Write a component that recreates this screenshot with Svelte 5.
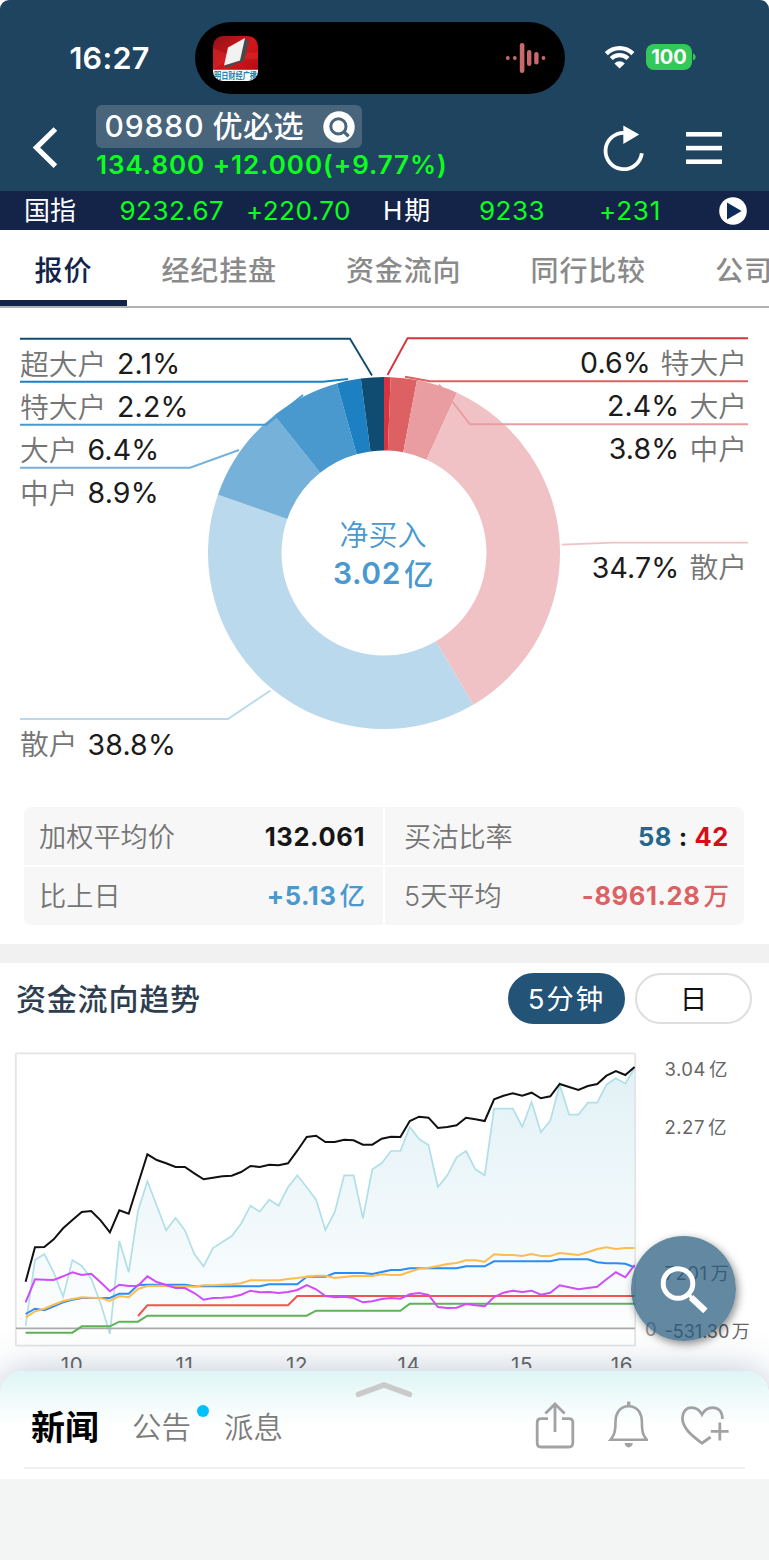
<script lang="ts">
  type Label = { name: string; pct: string; y: number; color: string; line: string };

  const tabs = ['报价', '经纪挂盘', '资金流向', '同行比较', '公司资料'];
  let activeTab = $state(0);
  let range = $state('5m');

  // ring geometry, clockwise from 12 o'clock
  const CX = 384;
  const CY = 553;
  const R_OUT = 176;
  const R_IN = 102.5;

  const slices = [
    { value: 0.6, color: '#d9333f' },
    { value: 2.4, color: '#dd6063' },
    { value: 3.8, color: '#e99da1' },
    { value: 34.7, color: '#f1c2c5' },
    { value: 38.8, color: '#bad9ed' },
    { value: 8.9, color: '#75b1d9' },
    { value: 6.4, color: '#4999cf' },
    { value: 2.2, color: '#1c80c2' },
    { value: 2.1, color: '#104c72' },
  ];

  const sellLabels: Label[] = [
    { name: '超大户', pct: '2.1%', y: 374, color: '#104c72', line: 'M20 338.7H350L372 375.5' },
    { name: '特大户', pct: '2.2%', y: 417, color: '#1c80c2', line: 'M20 381.7H323L348 379' },
    { name: '大户', pct: '6.4%', y: 460, color: '#4999cf', line: 'M20 424.7H266L303 395' },
    { name: '中户', pct: '8.9%', y: 503, color: '#75b1d9', line: 'M20 467.7H190L239 450' },
    { name: '散户', pct: '38.8%', y: 754.5, color: '#bad9ed', line: 'M20 719H228L270.5 690.5' },
  ];

  const buyLabels: Label[] = [
    { name: '特大户', pct: '0.6%', y: 373.3, color: '#d9333f', line: 'M748 338.3H407.5L387.5 375' },
    { name: '大户', pct: '2.4%', y: 416.3, color: '#dd6063', line: 'M748 381.3H430L405 376.7' },
    { name: '中户', pct: '3.8%', y: 459.3, color: '#e99da1', line: 'M748 424.3H470L439 384.5' },
    { name: '散户', pct: '34.7%', y: 577.8, color: '#f1c2c5', line: 'M748 542.6H613L562 544.6' },
  ];

  function polar(r: number, t: number) {
    const a = t * 2 * Math.PI;
    return `${(CX + r * Math.sin(a)).toFixed(2)} ${(CY - r * Math.cos(a)).toFixed(2)}`;
  }

  const total = slices.reduce((s, d) => s + d.value, 0);
  let acc = 0;
  const arcs = slices.map((d) => {
    const a = acc / total;
    acc += d.value;
    const b = acc / total;
    return {
      color: d.color,
      d: `M${polar(R_OUT, a)}A${R_OUT} ${R_OUT} 0 0 1 ${polar(R_OUT, b)}L${polar(R_IN, b)}A${R_IN} ${R_IN} 0 0 0 ${polar(R_IN, a)}Z`,
    };
  });

  // series are sampled every 5 minutes, y in thirds of a pixel below the section top
  const X0 = 25.6;
  const STEP = 9.37;
  const TOP = 1040;
  const fill = (v: number, n: number) => Array(n).fill(v);

  const price = [
    858, 660, 642, 697, 770, 660, 678, 716, 790, 882, 603, 697, 513, 424, 497, 571, 534, 571, 642, 679, 624, 606,
    588, 551, 497, 515, 479, 497, 442, 406, 442, 479, 570, 516, 406, 406, 535, 388, 370, 333, 333, 261, 297, 315,
    441, 406, 352, 333, 388, 406, 206, 206, 206, 260, 186, 277, 242, 134, 224, 224, 188, 188, 134, 115, 131, 84,
  ];
  const net = [
    725, 622, 621, 598, 565, 540, 516, 513, 541, 577, 511, 521, 432, 343, 360, 370, 381, 381, 400, 418, 413, 409,
    407, 396, 378, 381, 374, 376, 370, 332, 291, 287, 306, 306, 299, 301, 314, 314, 296, 290, 291, 243, 230, 233,
    264, 261, 256, 233, 238, 243, 178, 167, 160, 167, 158, 175, 169, 132, 141, 150, 138, 132, 107, 93, 105, 81,
  ];
  const retail = [
    787, 718, 719, 720, 709, 697, 705, 701, 727, 754, 734, 738, 737, 709, 726, 735, 744, 744, 759, 779, 774, 773,
    771, 764, 752, 757, 756, 759, 756, 750, 735, 748, 768, 772, 770, 774, 787, 784, 777, 774, 776, 763, 759, 765,
    801, 804, 803, 792, 796, 799, 771, 758, 752, 756, 752, 764, 758, 736, 742, 748, 744, 740, 718, 697, 712, 675,
  ];
  const large = [
    822, 806, 811, 799, 787, 779, 774, 774, 774, 774, 761, 761, 735, ...fill(734, 5), ...fill(739, 8),
    ...fill(733, 4), 710, 710, 710, 699, 699, 699, 699, 702, 696, 690, 690, ...fill(685, 6), 679, 679, 679,
    ...fill(664, 7), ...fill(658, 4), 667, 670, 670, 671, 682,
  ];
  const medium = [
    832, 814, 806, 794, 783, 777, 772, 773, 774, 783, 768, 772, 747, 738, 737, 738, 740, 739, 740, 736, 736, 734,
    733, 730, 721, 721, 721, 721, 717, 714, 710, 707, 707, 714, 711, 708, 708, 708, 703, 705, 705, 695, 686, 683,
    678, 672, 669, 661, 661, 665, 643, 645, 645, 648, 642, 648, 648, 639, 642, 645, 637, 627, 622, 627, 624, 624,
  ];
  const superLarge = [828, ...fill(796, 16), ...fill(768, 37)];
  const extraLarge = [
    ...fill(878, 6), ...fill(859, 4), ...fill(845, 3), ...fill(827, 18), ...fill(812, 10), ...fill(791, 25),
  ];

  function path(values: number[], start = 0) {
    return values
      .map((v, i) => `${i ? 'L' : 'M'}${(X0 + (i + start) * STEP).toFixed(1)} ${(TOP + v / 3).toFixed(1)}`)
      .join('');
  }

  const series = [
    { d: path(extraLarge), color: '#5fb355' },
    { d: path(superLarge, 12), color: '#f2554f' },
    { d: path(large), color: '#2a8cf8' },
    { d: path(medium), color: '#fdbc50' },
    { d: path(retail), color: '#cf4df8' },
    { d: path(net), color: '#111' },
  ];
  const area = path(price) + `V1328.3H${X0}Z`;

  const hours = [
    { x: 72, text: '10' },
    { x: 184.5, text: '11' },
    { x: 297, text: '12' },
    { x: 409, text: '14' },
    { x: 522, text: '15' },
    { x: 622, text: '16' },
  ];
</script>

<div class="app">
  <header class="header">
    <div class="status">
      <div class="time">16:27</div>
      <div class="island">
        <svg width="45" height="45" viewBox="0 0 45 45">
          <defs>
            <linearGradient id="red" x1="0" y1="0" x2="1" y2="1">
              <stop offset="0" stop-color="#8f1216" />
              <stop offset=".5" stop-color="#d3161b" />
              <stop offset="1" stop-color="#a30d11" />
            </linearGradient>
            <clipPath id="round"><rect width="45" height="45" rx="10" /></clipPath>
          </defs>
          <g clip-path="url(#round)">
            <rect width="45" height="45" fill="url(#red)" />
            <path d="M0 12L14 18L45 16V23L14 24L0 34Z" fill="#e02a2c" opacity=".5" />
            <path d="M32 2L36 5L31 25L14 31.6L11 29.4L26 25Z" fill="#4a4a4a" />
            <path d="M15 11.6L32 2L27 24.6L11 29.4Z" fill="#f2f2f2" />
            <rect y="33.8" width="45" height="11.2" fill="#fff" />
            <text x="1" y="42.8" textLength="43" lengthAdjust="spacingAndGlyphs" class="logo-text">明日财经广播</text>
          </g>
        </svg>
        <svg width="42" height="34" viewBox="505 41 42 34" fill="#c9696c">
          <circle cx="507.8" cy="58" r="1.9" />
          <circle cx="514.8" cy="58" r="1.9" />
          <rect x="519.8" y="43" width="4.6" height="30" rx="2.3" />
          <rect x="527" y="50" width="4.4" height="16" rx="2.2" />
          <rect x="534.2" y="52" width="4.4" height="12.4" rx="2.2" />
          <circle cx="543.5" cy="58" r="1.9" />
        </svg>
      </div>
      <div class="signals">
        <svg width="32" height="26" viewBox="604 44 32 26" fill="none" stroke="#fff">
          <path d="M606.3 53.6A18.8 18.8 0 0 1 632.9 53.6" stroke-width="4.4" />
          <path d="M611.2 58.5A12 12 0 0 1 628 58.5" stroke-width="4.2" />
          <path d="M619.6 68.6L614.4 63.4A7.4 7.4 0 0 1 624.8 63.4Z" fill="#fff" stroke="none" />
        </svg>
        <div class="battery">100</div>
        <svg class="cap" width="4" height="8" viewBox="0 0 4 8"><path d="M0 0.5C3.6 1.5 3.6 6.5 0 7.5Z" fill="#34c759" /></svg>
      </div>
    </div>

    <div class="title-row">
      <svg class="back" width="28" height="44" viewBox="31 126 28 44" fill="none" stroke="#fff" stroke-width="5.2">
        <path d="M55.4 129L36.4 147.6L55.4 166.2" />
      </svg>
      <div class="stock">
        <div class="pill">
          <span class="code">09880</span><span class="name">优必选</span>
          <svg width="32" height="32" viewBox="0 0 32 32">
            <circle cx="16" cy="16" r="15.7" fill="#fff" />
            <circle cx="15.4" cy="15.4" r="7.6" fill="none" stroke="#48657c" stroke-width="3" />
            <path d="M20.6 20.4L25.6 25.4" stroke="#48657c" stroke-width="3.4" />
          </svg>
        </div>
        <div class="quote">134.800 +12.000(+9.77%)</div>
      </div>
      <svg width="42" height="50" viewBox="603 123 42 50">
        <path d="M624.5 132.8A18.2 18.2 0 1 0 641.8 153.2" fill="none" stroke="#fff" stroke-width="3.8" />
        <path d="M623.3 125.4L639.2 134.6L623.3 144Z" fill="#fff" />
      </svg>
      <svg class="menu" width="36" height="32" viewBox="0 0 36 32" fill="#fff">
        <rect width="36" height="4.6" />
        <rect y="13.8" width="36" height="4.6" />
        <rect y="27.4" width="36" height="4.6" />
      </svg>
    </div>
  </header>

  <div class="ticker">
    <span class="t1">国指</span>
    <span class="t2 up">9232.67</span>
    <span class="t3 up">+220.70</span>
    <span class="t4">H期</span>
    <span class="t5 up">9233</span>
    <span class="t6 up">+231</span>
    <svg width="28" height="28" viewBox="0 0 28 28">
      <circle cx="14" cy="14" r="13.8" fill="#fff" />
      <path d="M8 5.6L22.6 14L8 22.6Z" fill="#0b2b5c" />
    </svg>
  </div>

  <nav class="tabs">
    {#each tabs as tab, i}
      <button class="tab" class:active={activeTab === i} onclick={() => (activeTab = i)}>{tab}</button>
    {/each}
  </nav>

  <section class="donut">
    <svg width="769" height="499" viewBox="0 308 769 499">
      {#each arcs as arc}
        <path d={arc.d} fill={arc.color} />
      {/each}
      {#each [...sellLabels, ...buyLabels] as l}
        <path d={l.line} fill="none" stroke={l.color} stroke-width="1.9" />
      {/each}
      {#each sellLabels as l}
        <text x="20" y={l.y + 0.5} class="who">{l.name}</text>
        <text x={l.name.length * 29 + (l.name.length === 3 ? 30 : 29.5)} y={l.y} class="pct">{l.pct}</text>
      {/each}
      {#each buyLabels as l}
        <text x="747" y={l.y + 0.5} class="who end">{l.name}</text>
        <text x={749 - l.name.length * 29 - (l.name.length === 3 ? 11 : 11.5)} y={l.y} class="pct end">{l.pct}</text>
      {/each}
      <text x="383" y="545.5" class="net-title">净买入</text>
      <text x="333" y="584" class="net-value">3.02</text>
      <text x="404" y="584.5" class="net-unit">亿</text>
    </svg>
  </section>

  <section class="stats">
    <div class="cell"><span>加权平均价</span><b>132.061</b></div>
    <div class="cell"><span>买沽比率</span><b><i class="buy">58</i> : <i class="sell">42</i></b></div>
    <div class="cell"><span>比上日</span><b class="blue">+5.13<em>亿</em></b></div>
    <div class="cell"><span>5天平均</span><b class="pink">-8961.28<em>万</em></b></div>
  </section>

  <section class="trend">
    <div class="trend-head">
      <h2>资金流向趋势</h2>
      <button class="range" class:on={range === '5m'} onclick={() => (range = '5m')}>5分钟</button>
      <button class="range" class:on={range === 'd'} onclick={() => (range = 'd')}>日</button>
    </div>
    <svg class="chart" width="769" height="328" viewBox="0 1040 769 328">
      <defs>
        <linearGradient id="area" gradientUnits="userSpaceOnUse" x1="0" y1="1066" x2="0" y2="1328">
          <stop offset="0" stop-color="#add8e6" stop-opacity=".36" />
          <stop offset="1" stop-color="#add8e6" stop-opacity=".03" />
        </linearGradient>
      </defs>
      <rect x="15.8" y="1053.3" width="619.4" height="292.4" rx="1" fill="none" stroke="#e4e4e6" stroke-width="1.8" />
      <path d={area} fill="url(#area)" />
      <path d={path(price)} fill="none" stroke="#b0dfe8" stroke-width="1.7" />
      <path d="M16 1328.4H635" stroke="#aaa" stroke-width="1.7" />
      {#each series as s}
        <path d={s.d} fill="none" stroke={s.color} stroke-width="2" />
      {/each}
      <text x="664.5" y="1076" class="axis">3.04<tspan dx="3">亿</tspan></text>
      <text x="664.5" y="1134" class="axis">2.27<tspan dx="3">亿</tspan></text>
      <text x="664.5" y="1280.3" class="axis">7201<tspan dx="3">万</tspan></text>
      <text x="664.5" y="1337.5" class="axis tight">-531.30<tspan dx="2.5">万</tspan></text>
      <text x="645" y="1335.6" class="axis zero">0</text>
      {#each hours as h}
        <text x={h.x} y="1371.8" class="hour">{h.text}</text>
      {/each}
    </svg>
    <button class="fab" aria-label="搜索">
      <svg width="50" height="50" viewBox="658 1263 50 50" fill="none" stroke="#fff">
        <circle cx="677" cy="1282.5" r="14.8" stroke-width="5" />
        <path d="M687.5 1293.5L692 1298" stroke-width="3.6" />
        <path d="M690 1296.4L704.4 1309.8" stroke-width="6.4" />
      </svg>
    </button>
  </section>

  <section class="sheet">
    <svg class="grip" width="60" height="18" viewBox="0 0 60 18">
      <path d="M3.4 13.4L29 4L54.6 13.4" fill="none" stroke="#cacaca" stroke-width="5.4" stroke-linecap="round" />
    </svg>
    <div class="sheet-row">
      <span class="st current">新闻</span>
      <span class="st dot">公告</span>
      <span class="st">派息</span>
      <div class="actions">
        <svg width="40" height="48" viewBox="536 1400 40 48" fill="none" stroke="#a2a2a2" stroke-width="2.8">
          <path d="M549 1417.6H542Q538.2 1417.6 538.2 1421.4V1442Q538.2 1446 542 1446H569.8Q573.8 1446 573.8 1442V1421.4Q573.8 1417.6 569.8 1417.6H563" />
          <path d="M556 1431V1403.4M546.4 1412.6L556 1403L565.6 1412.6" />
        </svg>
        <svg width="40" height="48" viewBox="609.5 1400 40 48" fill="none" stroke="#a2a2a2" stroke-width="2.6">
          <path d="M630 1405.2C620 1405.2 617 1414 617 1421C617 1432 615 1435 612 1438.8H648.4C645 1435 643.4 1432 643.4 1421C643.4 1414 640.4 1405.2 630 1405.2Z" />
          <path d="M630.2 1400.6V1405" stroke-width="3.4" />
          <path d="M626 1442H634.4Q633.4 1446.4 630.2 1446.4T626 1442Z" fill="#a2a2a2" stroke="none" />
        </svg>
        <svg width="50" height="48" viewBox="682 1400 50 48" fill="none" stroke="#a2a2a2" stroke-width="2.8">
          <path d="M723.4 1418C723.4 1409.6 718.8 1406.6 713.6 1406.6C708.4 1406.6 705 1409.6 703 1413.4C701 1409.6 697.6 1406.6 692.6 1406.6C687 1406.6 683.4 1411 683.4 1417C683.4 1428 695 1436 703 1442.2L711.6 1436" />
          <path d="M720.8 1421.6V1439.4M711.8 1430.4H729.6" />
        </svg>
      </div>
    </div>
    <hr />
  </section>
</div>

<style>
  :global(body) {
    background: #fff;
  }
  .app {
    width: 769px;
    height: 1560px;
    overflow: hidden;
    display: flex;
    flex-direction: column;
    background: #f3f5f5;
    font-family: Inter, 'Noto Sans CJK SC', sans-serif;
  }
  button {
    font: inherit;
    border: 0;
    padding: 0;
    background: none;
  }
  svg {
    display: block;
    flex: none;
  }
  .header,
  .ticker,
  .tabs,
  .donut,
  .stats,
  .trend,
  .sheet {
    flex: none;
    box-sizing: border-box;
  }

  .header {
    height: 191px;
    background: #1e4460;
    border-radius: 9px 9px 0 0;
    box-shadow: 0 0 0 9px #fff;
    color: #fff;
  }
  .status {
    display: flex;
    padding-top: 22px;
  }
  .time {
    width: 195px;
    padding-left: 24px;
    box-sizing: border-box;
    text-align: center;
    font-size: 30.5px;
    font-weight: 600;
    line-height: 71px;
    letter-spacing: 0.3px;
  }
  .island {
    display: flex;
    align-items: center;
    justify-content: space-between;
    box-sizing: border-box;
    width: 370px;
    height: 72px;
    padding: 0 18px;
    border-radius: 36px;
    background: #000;
  }
  .logo-text {
    font-size: 9.5px;
    font-weight: 700;
    fill: #2484ad;
  }
  .signals {
    display: flex;
    align-items: center;
    height: 70px;
    padding-left: 39px;
  }
  .battery {
    width: 46px;
    height: 26px;
    margin-left: 10px;
    border-radius: 8px;
    background: #34c759;
    text-align: center;
    font-size: 20px;
    font-weight: 700;
    line-height: 27px;
  }
  .cap {
    margin-left: 1px;
  }

  .title-row {
    display: flex;
    align-items: flex-start;
    padding: 11px 0 0 31px;
  }
  .back {
    margin-top: 21px;
  }
  .stock {
    width: 507px;
    margin-left: 37px;
  }
  .pill {
    display: flex;
    align-items: center;
    box-sizing: border-box;
    width: 266px;
    height: 43px;
    padding: 0 7px 0 8.5px;
    border-radius: 6px;
    background: #48657c;
    font-size: 30px;
    font-weight: 500;
    line-height: 43px;
  }
  .code {
    letter-spacing: 0.9px;
  }
  .name {
    flex: 1;
    margin-left: 8px;
    letter-spacing: 0.6px;
  }
  .quote {
    color: #0dff1c;
    font-size: 26px;
    font-weight: 570;
    line-height: 33px;
    letter-spacing: 0.95px;
    white-space: nowrap;
  }
  .title-row > :nth-child(3) {
    margin-top: 18px;
  }
  .menu {
    margin: 27px 0 0 41px;
  }

  .ticker {
    display: flex;
    align-items: center;
    height: 39px;
    padding-left: 24px;
    background: #142348;
    color: #fff;
    font-size: 26px;
    line-height: 39px;
    white-space: nowrap;
  }
  .up {
    color: #0dff1c;
    letter-spacing: 0.45px;
  }
  .t1 {
    width: 95.5px;
  }
  .t2 {
    width: 126.5px;
  }
  .t3 {
    width: 137px;
  }
  .t4 {
    width: 96px;
    letter-spacing: 2px;
  }
  .t5 {
    width: 120px;
  }
  .t6 {
    width: 120px;
    letter-spacing: 0.8px;
  }

  .tabs {
    display: flex;
    height: 78px;
    background: #fff;
    border-bottom: 2px solid #b1b1b1;
    overflow: hidden;
  }
  .tab {
    flex: none;
    padding: 7px 34.6px 0;
    border-bottom: 6px solid transparent;
    color: #8a8a8a;
    font-size: 28px;
    font-weight: 500;
    letter-spacing: 0.84px;
  }
  .tab.active {
    color: #142348;
    border-color: #142348;
  }

  .donut {
    height: 499px;
    background: #fff;
  }
  .who {
    font-size: 28.8px;
    font-weight: 350;
    fill: #757575;
  }
  .pct {
    font-size: 28.5px;
    font-weight: 380;
    letter-spacing: 0.15px;
    fill: #1b1b1b;
  }
  .end {
    text-anchor: end;
  }
  .net-title {
    font-size: 29px;
    font-weight: 350;
    fill: #4999cf;
    text-anchor: middle;
  }
  .net-value {
    font-size: 30px;
    font-weight: 600;
    fill: #4999cf;
    letter-spacing: 0.6px;
  }
  .net-unit {
    font-size: 29.5px;
    font-weight: 500;
    fill: #4999cf;
  }

  .stats {
    display: grid;
    grid-template-columns: 359px 359px;
    grid-template-rows: 58px 58px;
    gap: 2px;
    height: 137px;
    padding: 0 24px;
    background: #fff;
  }
  .cell {
    display: flex;
    align-items: center;
    justify-content: space-between;
    box-sizing: border-box;
    height: 58px;
    padding: 0 18px 0 15px;
    background: #f7f7f7;
    color: #757575;
    font-size: 27.2px;
    font-weight: 350;
    line-height: 56px;
  }
  .cell:first-child {
    border-radius: 8px 0 0 0;
  }
  .cell:nth-child(2) {
    border-radius: 0 8px 0 0;
  }
  .cell:nth-child(3) {
    border-radius: 0 0 0 8px;
  }
  .cell:nth-child(4) {
    border-radius: 0 0 8px 0;
  }
  .cell:nth-child(even) {
    padding-right: 15px;
    padding-left: 19px;
  }
  .cell span {
    padding-top: 4px;
  }
  .cell b {
    padding-top: 2px;
    color: #161616;
    font-size: 25.5px;
    font-weight: 700;
    letter-spacing: 0.6px;
  }
  .cell:nth-child(n + 3) b {
    padding-top: 0;
  }
  .cell:nth-child(n + 3) span {
    padding-top: 2px;
  }
  .cell i,
  .cell em {
    font-style: normal;
  }
  .cell em {
    margin-left: 3px;
    font-weight: 500;
    letter-spacing: 0;
  }
  .cell .buy {
    color: #23678c;
  }
  .cell .sell {
    color: #d90d18;
  }
  .cell .blue {
    color: #4999cf;
  }
  .cell .pink {
    color: #dd6063;
    letter-spacing: 0.6px;
  }

  .trend {
    position: relative;
    height: 451px;
    border-top: 19px solid #f1f1f1;
    background: #fff;
  }
  .trend-head {
    display: flex;
    gap: 10px;
    height: 67px;
    padding: 10px 17px 0 16px;
  }
  h2 {
    flex: 1;
    margin: 0;
    color: #2e3e4f;
    font-size: 30px;
    font-weight: 500;
    line-height: 53px;
    letter-spacing: 0.8px;
  }
  .range {
    box-sizing: border-box;
    width: 117px;
    height: 51px;
    padding-bottom: 3px;
    border: 2px solid #dedede;
    border-radius: 26px;
    color: #111;
    font-size: 27.5px;
  }
  .range.on {
    border-color: #235478;
    background: #235478;
    color: #fff;
    letter-spacing: 2px;
  }
  .axis {
    font-size: 18.5px;
    fill: #666;
    letter-spacing: 0.5px;
  }
  .tight {
    font-size: 18px;
    letter-spacing: 0;
  }
  .zero {
    fill: #999;
  }
  .hour {
    font-size: 20.5px;
    fill: #666;
    text-anchor: middle;
    letter-spacing: 0.6px;
  }
  .fab {
    position: absolute;
    left: 631px;
    top: 273px;
    display: grid;
    place-items: center;
    width: 105px;
    height: 105px;
    border-radius: 50%;
    background: rgba(39, 90, 125, 0.72);
    box-shadow: 2px 3px 8px rgba(0, 0, 0, 0.45);
  }

  .sheet {
    position: relative;
    height: 108px;
    margin-top: -24px;
    border-radius: 24px 24px 0 0;
    background: linear-gradient(#dff5f5, #fff 54px);
    box-shadow: 0 0 38px rgba(60, 90, 125, 0.34);
    clip-path: inset(-60px 0 0 0);
  }
  .grip {
    padding-top: 10px;
    margin: 0 auto;
  }
  .sheet-row {
    display: flex;
    align-items: center;
    height: 60px;
    margin-top: -4px;
    padding-left: 31px;
  }
  .st {
    position: relative;
    margin-right: 33px;
    color: #7c7c7c;
    font-size: 29.5px;
    font-weight: 350;
  }
  .st.current {
    color: #000;
    font-size: 34px;
    font-weight: 700;
  }
  .dot::after {
    content: '';
    position: absolute;
    top: 1px;
    right: -18px;
    width: 12px;
    height: 12px;
    border-radius: 50%;
    background: #00bfff;
  }
  .actions {
    display: flex;
    gap: 33px;
    margin: -1px 0 0 auto;
    padding-right: 38px;
  }
  hr {
    height: 2px;
    margin: 12px 24px 0;
    border: 0;
    background: #f0f0f0;
  }
</style>
